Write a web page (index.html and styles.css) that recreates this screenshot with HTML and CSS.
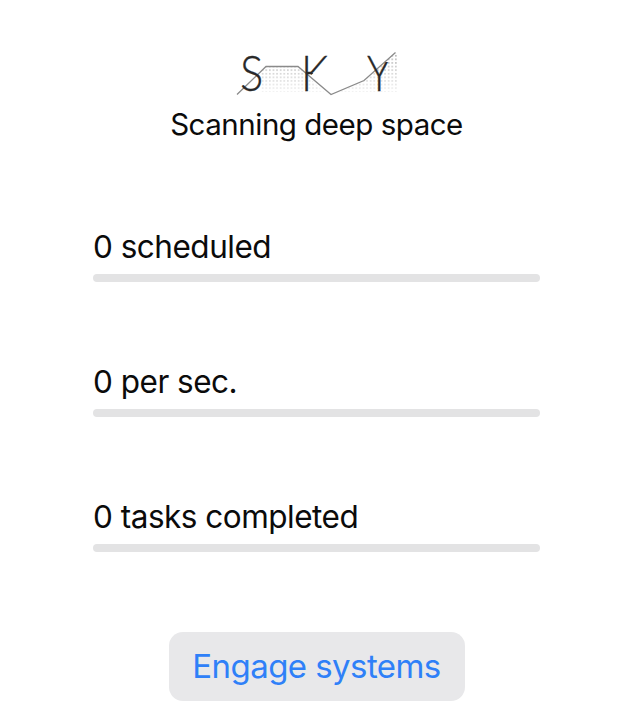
FILE: index.html
```
<!DOCTYPE html>
<html lang="en">
<head>
<meta charset="utf-8">
<title>SKY</title>
<link rel="stylesheet" href="styles.css">
</head>
<body>
<main class="panel">
  <svg class="logo" viewBox="232 34 170 74" role="img" aria-label="SKY">
    <defs>
      <pattern id="dots" x="264.500" y="54" width="3.600" height="3.600" patternUnits="userSpaceOnUse">
        <rect x="1" y="1" width="1.500" height="1.500" fill="#777"/>
      </pattern>
      <linearGradient id="fade" x1="0" y1="0" x2="0" y2="1">
        <stop offset="0" stop-color="#fff" stop-opacity=".7"/>
        <stop offset="1" stop-color="#fff" stop-opacity=".1"/>
      </linearGradient>
      <mask id="dot-mask">
        <rect x="255" y="50" width="145" height="44" fill="url(#fade)"/>
      </mask>
      <clipPath id="upper-arm">
        <path d="M298 50H332V54L309 77.500V95H298Z"/>
      </clipPath>
      <clipPath id="short-arm">
        <path d="M364 50H380V62H394V95H364Z"/>
      </clipPath>
    </defs>
    <g mask="url(#dot-mask)">
      <path fill="url(#dots)" d="M266 67H298L324 92H261V72ZM398 53V92H340L364 81L395 53Z"/>
    </g>
    <path class="trace" d="M237 94.500L266 66.500H298L331 94.500L364 80.500L395.500 52.500"/>
    <g class="letters">
      <text transform="translate(240 91) scale(.87 1)">S</text>
      <g clip-path="url(#upper-arm)"><text transform="translate(301 91) scale(.86 1)">K</text></g>
      <g clip-path="url(#short-arm)"><text transform="translate(367 91) scale(.82 1)">Y</text></g>
    </g>
  </svg>
  <h1 class="title">Scanning deep space</h1>
  <section class="stats">
    <div class="stat"><p class="label">0 scheduled</p><div class="track"></div></div>
    <div class="stat"><p class="label">0 per sec.</p><div class="track"></div></div>
    <div class="stat"><p class="label">0 tasks completed</p><div class="track"></div></div>
  </section>
  <button class="engage" type="button">Engage systems</button>
</main>
</body>
</html>
```
FILE: styles.css
```
* { box-sizing: border-box; }
body {
  margin: 0;
  background: #fff;
  color: #0b0b0b;
  font-family: Inter, "Liberation Sans", sans-serif;
}
.panel {
  display: flex;
  flex-direction: column;
  align-items: center;
  width: 633px;
  padding-top: 34px;
}
.logo { display: block; width: 170px; height: 74px; }
.trace { fill: none; stroke: #8a8a8a; stroke-width: 1.3; }
.letters {
  fill: #292929;
  stroke: #292929;
  stroke-width: .3;
  font: 300 50px/1 Lato, sans-serif;
}
.title {
  margin: -3px 0 0;
  font-size: 29.5px;
  font-weight: 400;
  line-height: 38px;
  letter-spacing: -.48px;
  white-space: nowrap;
}
.stats {
  display: flex;
  flex-direction: column;
  gap: 79px;
  width: 447px;
  margin-top: 83px;
}
.label {
  margin: 0 0 6px;
  font-size: 31.5px;
  line-height: 42px;
  letter-spacing: -.5px;
}
.track { height: 8px; border-radius: 4px; background: #e3e3e4; }
.engage {
  width: 296px;
  height: 69px;
  margin-top: 80px;
  padding: 0 0 1px;
  border: 0;
  border-radius: 14px;
  background: #e8e8ea;
  color: #2f80f8;
  font: 400 33px Inter, "Liberation Sans", sans-serif;
  letter-spacing: -.57px;
}
```
